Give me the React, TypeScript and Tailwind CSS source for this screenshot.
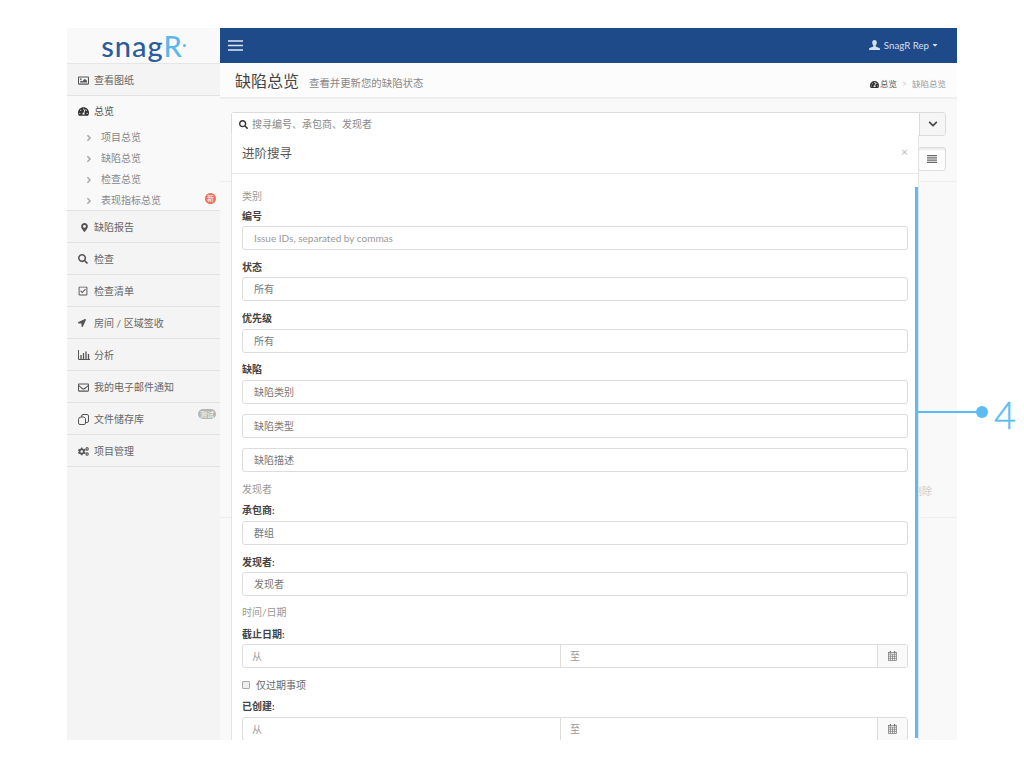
import {
  FaAngleRight,
  FaCaretDown,
  FaChevronDown,
  FaCogs,
  FaLocationArrow,
  FaMapMarkerAlt,
  FaRegCheckSquare,
  FaRegEnvelope,
  FaRegImage,
  FaSearch,
  FaTachometerAlt,
} from "react-icons/fa";
import type { ReactNode } from "react";

const font = "font-['Lato','Noto_Sans_CJK_SC',sans-serif]";

function BarsChartIcon() {
  return (
    <svg width="12" height="10" viewBox="0 0 12 10" fill="none" stroke="currentColor" strokeWidth="1">
      <path d="M.5 0v9.5H12" />
      <path d="M3 9V5M5.500 9V3M8 9V1.500M10.500 9V4" strokeWidth="1.300" />
    </svg>
  );
}

function FilesIcon() {
  return (
    <svg width="11" height="11" viewBox="0 0 11 11" fill="none" stroke="currentColor" strokeWidth="1">
      <path d="M3.500 3V2a1.500 1.500 0 0 1 1.500-1.500h4A1.500 1.500 0 0 1 10.500 2v5A1.500 1.500 0 0 1 9 8.500H7.500" />
      <path d="M3 3h3l1.500 1.500V9A1.500 1.500 0 0 1 6 10.500H2A1.500 1.500 0 0 1 .5 9V5.500A2.500 2.500 0 0 1 3 3Z" />
    </svg>
  );
}

function UserIcon() {
  return (
    <svg width="11" height="11" viewBox="0 0 11 11" fill="currentColor">
      <path d="M5.500 0C4 0 3.200 1 3.200 2.600c0 1.100.5 2.300 1.100 2.900v.9L.6 8C.2 8.200 0 8.500 0 9v1h11V9c0-.5-.2-.8-.6-1L6.700 6.400v-.9c.6-.6 1.100-1.800 1.100-2.900C7.800 1 7 0 5.500 0Z" />
    </svg>
  );
}

function MenuLines() {
  return (
    <svg width="15" height="11" viewBox="0 0 15 11" stroke="currentColor" strokeWidth="1.300">
      <path d="M0 1h15M0 5.500h15M0 10h15" />
    </svg>
  );
}

function JustifyIcon() {
  return (
    <svg width="10" height="8" viewBox="0 0 10 8" stroke="currentColor" strokeWidth="1.200">
      <path d="M0 .7h10M0 2.900h10M0 5.100h10M0 7.300h10" />
    </svg>
  );
}

function CalendarIcon() {
  return (
    <svg width="9" height="10" viewBox="0 0 9 10" fill="none" stroke="currentColor" strokeWidth=".7">
      <rect x=".4" y="1.400" width="8.200" height="8.200" />
      <path d="M.4 3.200h8.200M.4 5.300h8.200M.4 7.400h8.200M2.400 3.200v6.400M4.500 3.200v6.400M6.600 3.200v6.400" />
      <path d="M2.400 0v2.400M6.600 0v2.400" strokeWidth="1.200" />
    </svg>
  );
}

const menuBelow: { icon: ReactNode; label: string; badge?: string }[] = [
  { icon: <FaMapMarkerAlt className="ml-[2px] text-[9px]" />, label: "缺陷报告" },
  { icon: <FaSearch className="text-[10px]" />, label: "检查" },
  { icon: <FaRegCheckSquare className="text-[10px]" />, label: "检查清单" },
  { icon: <FaLocationArrow className="text-[8px]" />, label: "房间 / 区域签收" },
  { icon: <BarsChartIcon />, label: "分析" },
  { icon: <FaRegEnvelope className="text-[11px]" />, label: "我的电子邮件通知" },
  { icon: <FilesIcon />, label: "文件储存库", badge: "测试" },
  { icon: <FaCogs className="text-[11px]" />, label: "项目管理" },
];

function MenuRow({ icon, label, badge }: { icon: ReactNode; label: string; badge?: string }) {
  return (
    <div className="relative flex h-8 items-center border-b border-[#e2e2e2] pl-[11px] pt-[1px] text-[10px] text-[#666]">
      <span className="flex w-4 justify-start text-[#555]">{icon}</span>
      <span>{label}</span>
      {badge && (
        <span className="absolute right-[4px] top-[6px] flex h-[10px] w-[18px] items-center justify-center rounded-full bg-[#b5b5b5] text-[7px] text-white">
          {badge}
        </span>
      )}
    </div>
  );
}

function SubRow({ label, badge }: { label: string; badge?: string }) {
  return (
    <div className="relative flex h-[21px] items-center pl-[17px] text-[10px] text-[#888]">
      <FaAngleRight className="mr-[7px] text-[10px] text-[#aaa]" />
      <span>{label}</span>
      {badge && (
        <span className="absolute right-[4px] top-[3px] flex h-[11px] w-[11px] items-center justify-center rounded-full bg-[#e8705a] text-[7px] text-white">
          {badge}
        </span>
      )}
    </div>
  );
}

function Sidebar() {
  return (
    <aside className="flex w-[153px] shrink-0 flex-col bg-[#f4f4f4]">
      <div className="flex h-9 items-center justify-center border-b border-[#e6e6e6] bg-[#f9f9f9] pr-[3px]">
        <span className="relative font-['Lato',sans-serif] text-[29px] font-medium leading-none tracking-[1px] text-[#2a5c9e]">
          snag<span className="text-[#5bb8ea]">R</span>
          <span className="absolute right-[-3px] top-[13px] h-[3px] w-[3px] rounded-full bg-[#5bb8ea]" />
        </span>
      </div>
      <div className="flex h-8 items-center border-b border-[#e2e2e2] pl-[11px] pt-[1px] text-[10px] text-[#666]">
        <FaRegImage className="mr-[5px] w-[11px] text-[11px] text-[#555]" />
        <span>查看图纸</span>
      </div>
      <div className="h-[115px] border-b border-[#e2e2e2] bg-[#f9f9f9]">
        <div className="flex h-[31px] items-center pl-[11px] text-[10px] text-[#555]">
          <FaTachometerAlt className="mr-[5px] w-[11px] text-[11px] text-[#333]" />
          <span>总览</span>
        </div>
        <SubRow label="项目总览" />
        <SubRow label="缺陷总览" />
        <SubRow label="检查总览" />
        <SubRow label="表现指标总览" badge="新" />
      </div>
      {menuBelow.map((m) => (
        <MenuRow key={m.label} icon={m.icon} label={m.label} badge={m.badge} />
      ))}
    </aside>
  );
}

function SectionTitle({ children, className }: { children: ReactNode; className: string }) {
  return <div className={`text-[10px] leading-[14px] text-[#999] ${className}`}>{children}</div>;
}

function FieldLabel({ children, className }: { children: ReactNode; className: string }) {
  return <div className={`text-[10px] font-bold leading-[14px] text-[#444] ${className}`}>{children}</div>;
}

function Field({ children, className = "" }: { children: ReactNode; className?: string }) {
  return (
    <div className={`flex h-6 items-center rounded-[3px] border border-[#dcdcdc] bg-white pl-[11px] text-[10px] text-[#777] ${className}`}>
      {children}
    </div>
  );
}

function DateRange({ className }: { className: string }) {
  return (
    <div className={`flex h-6 rounded-[3px] border border-[#dcdcdc] bg-white text-[10px] text-[#999] ${className}`}>
      <div className="flex w-[318px] items-center border-r border-[#dcdcdc] pl-[9px]">从</div>
      <div className="flex w-[317px] items-center border-r border-[#dcdcdc] pl-[9px]">至</div>
      <div className="flex flex-1 items-center justify-center bg-[#f9f9f9] text-[#777]">
        <CalendarIcon />
      </div>
    </div>
  );
}

function SearchModal() {
  return (
    <div className="absolute left-[11px] top-[107px] h-[605px] w-[688px] border-x border-[#e4e4e4] bg-white">
      <div className="flex h-[39px] items-center justify-between border-b border-[#e8e8e8] pl-[10px] pr-[10px]">
        <span className="text-[12.5px] text-[#555]">进阶搜寻</span>
        <span className="mb-[4px] text-[12px] leading-none text-[#bbb]">×</span>
      </div>
      <div className="px-[10px]">
        <SectionTitle className="mt-[15px]">类别</SectionTitle>
        <FieldLabel className="mt-[6px]">编号</FieldLabel>
        <Field className="mt-[3px] pl-[8px] font-['Lato',sans-serif] text-[#999]">Issue IDs, separated by commas</Field>
        <FieldLabel className="mt-[10px]">状态</FieldLabel>
        <Field className="mt-[3px]">所有</Field>
        <FieldLabel className="mt-[10px]">优先级</FieldLabel>
        <Field className="mt-[4px]">所有</Field>
        <FieldLabel className="mt-[9px]">缺陷</FieldLabel>
        <Field className="mt-[4px]">缺陷类别</Field>
        <Field className="mt-[10px]">缺陷类型</Field>
        <Field className="mt-[10px]">缺陷描述</Field>
        <SectionTitle className="mt-[10px]">发现者</SectionTitle>
        <FieldLabel className="mt-[7px]">承包商:</FieldLabel>
        <Field className="mt-[4px]">群组</Field>
        <FieldLabel className="mt-[10px]">发现者:</FieldLabel>
        <Field className="mt-[3px]">发现者</Field>
        <SectionTitle className="mt-[9px]">时间/日期</SectionTitle>
        <FieldLabel className="mt-[8px]">截止日期:</FieldLabel>
        <DateRange className="mt-[3px]" />
        <label className="mt-[10px] flex h-[14px] items-center text-[10px] text-[#666]">
          <span className="mr-[6px] h-[8px] w-[8px] rounded-[1px] border border-[#aaa] bg-[#eee]" />
          仅过期事项
        </label>
        <FieldLabel className="mt-[7px]">已创建:</FieldLabel>
        <DateRange className="mt-[4px]" />
      </div>
      <div className="absolute bottom-[2px] right-[0px] top-[52px] w-[3px] bg-[#5bbcf5]" />
    </div>
  );
}

export default function App() {
  return (
    <div className={`relative h-[768px] w-[1024px] overflow-hidden bg-white pl-[67px] pt-[28px] ${font}`}>
      <div className="flex h-[712px] w-[890px] overflow-hidden">
        <Sidebar />
        <main className="relative flex flex-1 flex-col bg-[#f9f9f9]">
          <header className="flex h-[35px] shrink-0 items-center justify-between bg-[#1f4a8a] pl-[8px] pr-[18px] text-white">
            <span className="text-[#dfe7f3]">
              <MenuLines />
            </span>
            <div className="flex items-center text-[9.7px] text-[#d5dfee]">
              <span className="mr-[4px]">
                <UserIcon />
              </span>
              <span>SnagR Rep</span>
              <FaCaretDown className="ml-[2px] text-[8px]" />
            </div>
          </header>
          <div className="flex h-9 shrink-0 items-center justify-between border-b-2 border-[#eeeeee] bg-[#fcfcfc] pl-[15px] pr-[11px]">
            <div className="flex items-baseline pt-[2px]">
              <span className="text-[16px] text-[#444]">缺陷总览</span>
              <span className="ml-[10px] text-[10.4px] text-[#888]">查看并更新您的缺陷状态</span>
            </div>
            <div className="flex items-center pt-[8px] text-[8.5px] text-[#555]">
              <FaTachometerAlt className="mr-[1px] text-[9px] text-[#333]" />
              <span>总览</span>
              <span className="mx-[5px] text-[#ccc]">&gt;</span>
              <span className="text-[#999]">缺陷总览</span>
            </div>
          </div>
          <div className="flex-1">
            <div className="mx-[11px] mt-[13px] flex h-6 rounded-[3px] border border-[#dcdcdc]">
              <div className="flex w-[688px] items-center gap-[4px] border-r border-[#dcdcdc] bg-white pl-[7px] text-[10px] text-[#888]">
                <FaSearch className="text-[9px] text-[#333]" />
                <span>搜寻编号、承包商、发现者</span>
              </div>
              <div className="flex flex-1 items-center justify-center bg-[#f5f5f5] text-[10px] text-[#444]">
                <FaChevronDown />
              </div>
            </div>
            <div className="border-b border-[#eeeeee] pb-[10px] pt-[11px]">
              <div className="ml-[698px] flex h-6 w-[28px] items-center justify-center rounded-[3px] border border-[#dcdcdc] bg-white text-[#666] shadow-[inset_0_2px_2px_rgba(0,0,0,0.08)]">
                <JustifyIcon />
              </div>
            </div>
            <div className="flex h-[336px] items-end justify-end border-b border-[#eeeeee] pb-[18px] pr-[25px] text-[10px] text-[#ccc]">
              删除
            </div>
          </div>
          <SearchModal />
        </main>
      </div>
      {/* callout */}
      <div className="absolute left-[918px] top-[411px] h-[2px] w-[64px] bg-[#5bbcf5]" />
      <div className="absolute left-[976px] top-[406px] h-3 w-3 rounded-full bg-[#5bbcf5]" />
      <div className="absolute left-[994px] top-[392px] font-['Lato',sans-serif] text-[38px] font-light leading-[44px] text-[#5bbcf5] [-webkit-text-stroke:0.4px_#5bbcf5]">
        4
      </div>
    </div>
  );
}
